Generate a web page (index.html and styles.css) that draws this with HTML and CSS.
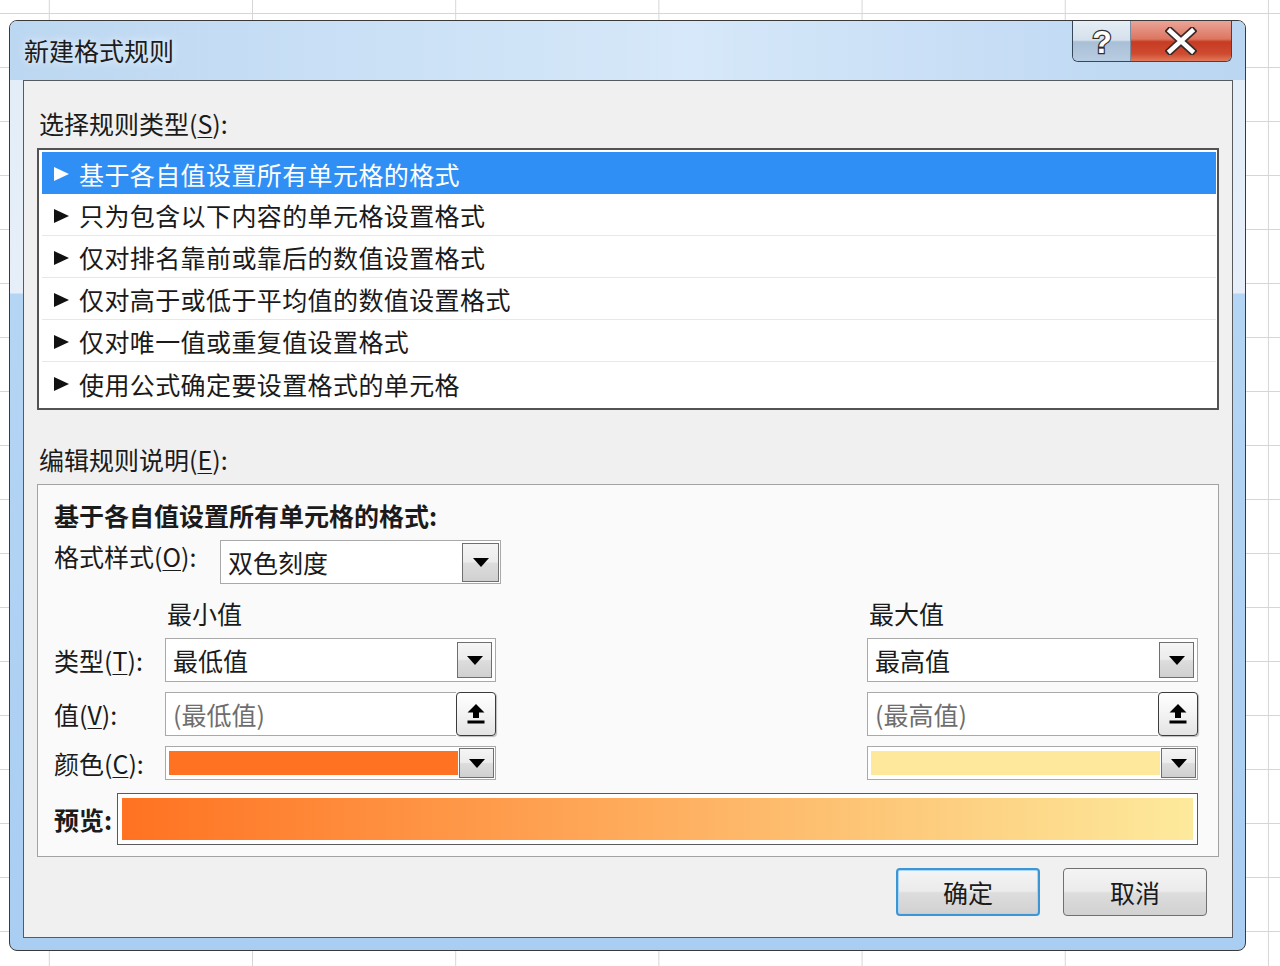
FILE: index.html
```html
<!DOCTYPE html>
<html lang="zh-CN">
<head>
<meta charset="utf-8">
<title>新建格式规则</title>
<link rel="stylesheet" href="styles.css">
</head>
<body>
<div class="dialog">
  <div class="titlebar">
    <span class="title">新建格式规则</span>
    <div class="captionbtns">
      <div class="helpbtn">
        <svg width="30" height="40" viewBox="0 0 30 40"><text x="15" y="32" text-anchor="middle" class="helpglyph">?</text></svg>
      </div>
      <div class="closebtn">
        <svg width="32" height="28" viewBox="0 0 32 28">
          <path d="M5 4 L27 24 M27 4 L5 24" stroke="#3b2a28" stroke-width="8" stroke-linecap="square" fill="none"/>
          <path d="M5 4 L27 24 M27 4 L5 24" stroke="#fff" stroke-width="4.5" stroke-linecap="square" fill="none"/>
        </svg>
      </div>
    </div>
  </div>

  <div class="client">
    <div class="grouplabel">选择规则类型(<u>S</u>):</div>
    <ul class="rulelist">
      <li class="selected"><span class="arrow"></span>基于各自值设置所有单元格的格式</li>
      <li><span class="arrow"></span>只为包含以下内容的单元格设置格式</li>
      <li><span class="arrow"></span>仅对排名靠前或靠后的数值设置格式</li>
      <li><span class="arrow"></span>仅对高于或低于平均值的数值设置格式</li>
      <li><span class="arrow"></span>仅对唯一值或重复值设置格式</li>
      <li class="last"><span class="arrow"></span>使用公式确定要设置格式的单元格</li>
    </ul>

    <div class="grouplabel second">编辑规则说明(<u>E</u>):</div>
    <div class="editpanel">
      <div class="paneltitle">基于各自值设置所有单元格的格式:</div>

      <div class="stylerow">
        <span class="stylelabel">格式样式(<u>O</u>):</span>
        <div class="combo stylecombo"><span class="value">双色刻度</span><span class="dropbtn"></span></div>
      </div>

      <div class="scalegrid">
        <span></span>
        <span class="colhead">最小值</span>
        <span></span>
        <span class="colhead">最大值</span>

        <span class="rowlabel">类型(<u>T</u>):</span>
        <div class="combo"><span class="value">最低值</span><span class="dropbtn"></span></div>
        <span></span>
        <div class="combo"><span class="value">最高值</span><span class="dropbtn"></span></div>

        <span class="rowlabel">值(<u>V</u>):</span>
        <div class="valuebox">
          <span class="field">(最低值)</span>
          <span class="refbtn"><svg width="18" height="20" viewBox="0 0 18 20"><path d="M9 0 L17.5 8.5 L12 8.5 L12 14 L6 14 L6 8.5 L0.5 8.5 Z" fill="#000"/><rect x="0.5" y="16.5" width="17" height="3" fill="#000"/></svg></span>
        </div>
        <span></span>
        <div class="valuebox">
          <span class="field">(最高值)</span>
          <span class="refbtn"><svg width="18" height="20" viewBox="0 0 18 20"><path d="M9 0 L17.5 8.5 L12 8.5 L12 14 L6 14 L6 8.5 L0.5 8.5 Z" fill="#000"/><rect x="0.5" y="16.5" width="17" height="3" fill="#000"/></svg></span>
        </div>

        <span class="rowlabel">颜色(<u>C</u>):</span>
        <div class="combo colorcombo"><span class="swatch mincolor"></span><span class="dropbtn"></span></div>
        <span></span>
        <div class="combo colorcombo"><span class="swatch maxcolor"></span><span class="dropbtn"></span></div>
      </div>

      <div class="previewrow">
        <span class="previewlabel">预览:</span>
        <div class="preview"><div class="previewbar"></div></div>
      </div>
    </div>

    <div class="buttons">
      <button class="btn default">确定</button>
      <button class="btn">取消</button>
    </div>
  </div>
</div>
</body>
</html>
```

FILE: styles.css
```css
html, body
{
	margin:0;
}
body
{
	width:1280px;
	height:966px;
	overflow:hidden;
	background-color:#fff;
	background-image:linear-gradient(to right, #d6d6d6 1px, transparent 1px), linear-gradient(to bottom, #d6d6d6 1px, transparent 1px);
	background-size:203.2px 54px;
	background-position:252px 0, 0 13px;
	font-family:"Noto Sans CJK SC", "Noto Sans", sans-serif;
	font-size:25px;
	color:#1b1b1b;
}
u
{
	text-underline-offset:3px;
	text-decoration-thickness:1px;
}

/* window frame */
.dialog
{
	box-sizing:border-box;
	width:1237px;
	height:931px;
	margin:20px 0 0 9px;
	border:1px solid #3a3a3a;
	border-radius:8px;
	padding:0 12px 12px 13px;
	background:linear-gradient(to bottom, #e2edf8 0, #e6eff9 272px, #b5d5f4 273px, #a9cef2 100%);
	display:flex;
	flex-direction:column;
}
.titlebar
{
	height:59px;
	flex:none;
	margin:0 -12px 0 -13px;
	padding:0 13px 0 14px;
	display:flex;
	justify-content:space-between;
	align-items:center;
	border-radius:7px 7px 0 0;
	background:linear-gradient(to right, #bcd7f1 0%, #c8dff5 25%, #d6e8f9 55%, #c6ddf5 80%, #bad6f1 100%);
}
.title
{
	font-size:25px;
	color:#1c1c1c;
	text-shadow:0 0 8px rgba(255,255,255,0.9);
	line-height:1;
}
.captionbtns
{
	align-self:flex-start;
	display:flex;
	height:40px;
	border:1px solid #36475a;
	border-top:0;
	border-radius:0 0 6px 6px;
	overflow:hidden;
}
.helpbtn
{
	width:57px;
	display:flex;
	align-items:center;
	justify-content:center;
	background:linear-gradient(to bottom, #e6eef6 0%, #d4e0ec 48%, #a9bfd6 52%, #b8cde1 100%);
	border-right:1px solid #7a8ea3;
}
.helpglyph
{
	font-family:"Liberation Sans", sans-serif;
	font-weight:bold;
	font-size:32px;
	fill:#fff;
	stroke:#2e2e2e;
	stroke-width:2.4px;
	paint-order:stroke;
}
.closebtn
{
	width:100px;
	display:flex;
	align-items:center;
	justify-content:center;
	background:linear-gradient(to bottom, #eaa497 0%, #dc7661 45%, #c63b23 52%, #cf4a30 82%, #e07a5a 100%);
}

/* client area */
.client
{
	flex:1;
	border:1px solid #575b60;
	background:#f0f0f0;
	padding:0 13px;
	display:flex;
	flex-direction:column;
}
.grouplabel
{
	line-height:30px;
	margin-top:27px;
	padding-left:2px;
}
.grouplabel.second
{
	margin-top:34px;
}
.rulelist
{
	list-style:none;
	margin:10px 0 0;
	padding:2px 1px 4px 3px;
	border:2px solid #535353;
	background:#fff;
}
.rulelist li
{
	height:42px;
	box-sizing:border-box;
	border-bottom:1px solid #e8e8e8;
	display:flex;
	align-items:center;
	padding:2px 0 0 12px;
	line-height:1;
	letter-spacing:0.4px;
	color:#1a1a1a;
}
.rulelist li.last
{
	border-bottom:0;
}
.rulelist li.selected
{
	background:#2f8ff5;
	color:#fff;
	border-bottom:0;
}
.arrow
{
	width:0;
	height:0;
	border-left:15px solid #111;
	border-top:7px solid transparent;
	border-bottom:7px solid transparent;
	margin-right:10px;
}
.selected .arrow
{
	border-left-color:#fff;
}

/* rule description panel */
.editpanel
{
	margin-top:10px;
	border:1px solid #a2a2a2;
	background:#fafafa;
	padding:15px 20px 11px 16px;
}
.paneltitle
{
	line-height:30px;
	font-weight:bold;
}
.stylerow
{
	margin-top:10px;
	display:flex;
	align-items:flex-start;
}
.stylelabel
{
	width:166px;
	line-height:32px;
}
.combo
{
	display:flex;
	box-sizing:border-box;
	height:44px;
	border:1px solid #a9a9a9;
	background:#fff;
}
.combo .value
{
	flex:1;
	display:flex;
	align-items:center;
	padding-left:7px;
	line-height:1;
}
.stylecombo
{
	width:281px;
}
.dropbtn
{
	width:35px;
	margin:3px;
	box-sizing:border-box;
	border:1px solid #6f6f6f;
	background:linear-gradient(to bottom, #f5f5f5 0%, #ececec 48%, #dddddd 52%, #d0d0d0 100%);
	display:flex;
	align-items:center;
	justify-content:center;
}
.dropbtn::after
{
	content:"";
	border-top:9px solid #000;
	border-left:8px solid transparent;
	border-right:8px solid transparent;
}
.stylecombo .dropbtn
{
	margin:2px 1px 1px 0;
	width:37px;
}
.scalegrid
{
	margin-top:14px;
	display:grid;
	grid-template-columns:111px 331px 1fr 331px;
	grid-template-rows:30px 44px 44px 34px;
	row-gap:10px;
	align-items:center;
}
.colhead
{
	padding-left:2px;
	line-height:30px;
}
.rowlabel
{
	line-height:30px;
}
.valuebox
{
	display:flex;
	height:44px;
}
.field
{
	flex:1;
	box-sizing:border-box;
	border:1px solid #a9a9a9;
	border-right:0;
	background:#fff;
	display:flex;
	align-items:center;
	padding-left:7px;
	color:#6e6e6e;
}
.refbtn
{
	width:40px;
	box-sizing:border-box;
	border:1px solid #3c3c3c;
	border-radius:4px;
	background:linear-gradient(to bottom, #ffffff 0%, #f3f3f3 50%, #e3e3e3 100%);
	box-shadow:1px 1px 1px rgba(0,0,0,0.25);
	display:flex;
	align-items:center;
	justify-content:center;
}
.colorcombo
{
	height:34px;
}
.colorcombo .swatch
{
	flex:1;
	margin:4px 1px 4px 3px;
}
.colorcombo .dropbtn
{
	margin:1px 1px 1px 0;
}
.mincolor
{
	background:#ff7221;
}
.maxcolor
{
	background:#fde89b;
}
.previewrow
{
	margin-top:13px;
	display:flex;
	align-items:center;
	height:52px;
}
.previewlabel
{
	width:63px;
	font-weight:bold;
}
.preview
{
	flex:1;
	height:52px;
	box-sizing:border-box;
	border:1px solid #5a5a5a;
	background:#fff;
	padding:4px;
}
.previewbar
{
	height:100%;
	background:linear-gradient(to right, #ff7221, #fdea9c);
}

/* OK / Cancel */
.buttons
{
	margin-top:11px;
	display:flex;
	justify-content:flex-end;
	gap:23px;
	padding-right:12px;
}
.btn
{
	width:144px;
	height:48px;
	box-sizing:border-box;
	border:1px solid #707070;
	border-radius:4px;
	background:linear-gradient(to bottom, #f4f4f4 0%, #ebebeb 48%, #dddddd 52%, #d1d1d1 100%);
	font-family:"Noto Sans CJK SC", "Noto Sans", sans-serif;
	font-size:25px;
	color:#1b1b1b;
	padding:0;
}
.btn.default
{
	border:2px solid #3c96d6;
	box-shadow:inset 0 0 0 1px #a9d6f3;
}
```
